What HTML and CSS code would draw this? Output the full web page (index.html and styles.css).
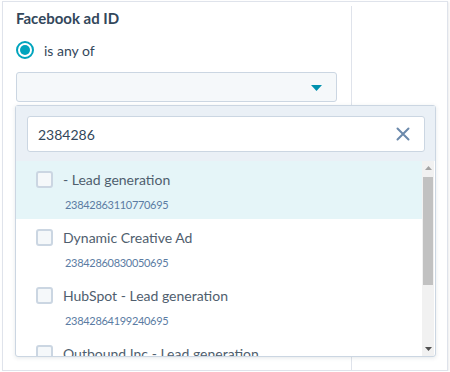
FILE: index.html
```html
<!DOCTYPE html>
<html lang="en">
<head>
    <meta charset="UTF-8">
    <meta name="viewport" content="width=device-width, initial-scale=1.0">
    <title>Facebook ad ID filter</title>
    <link rel="stylesheet" href="styles.css">
</head>
<body>
    <div class="frame">
        <div class="filter-col">
            <h3 class="filter-title">Facebook ad ID</h3>

            <label class="radio-row">
                <span class="radio"><span class="radio-dot"></span></span>
                is any of
            </label>

            <div class="select">
                <svg class="caret" width="11" height="6" viewBox="0 0 11 6">
                    <path d="M0 0h11L5.5 6z" fill="#0091ae"></path>
                </svg>
            </div>
        </div>
        <div class="side-col"></div>

        <!-- Dropdown panel -->
        <div class="dropdown">
            <div class="dropdown-header">
                <div class="search">
                    <span class="search-value">2384286</span>
                    <svg class="clear" width="14" height="14" viewBox="0 0 14 14">
                        <path d="M1.5 1.5l11 11M12.5 1.5l-11 11" stroke="#6b89ab" stroke-width="2" stroke-linecap="round"></path>
                    </svg>
                </div>
            </div>

            <div class="dropdown-list">
                <div class="options">
                    <div class="option active">
                        <span class="checkbox"></span>
                        <div class="option-text">
                            <div class="option-label">- Lead generation</div>
                            <div class="option-id">23842863110770695</div>
                        </div>
                    </div>
                    <div class="option">
                        <span class="checkbox"></span>
                        <div class="option-text">
                            <div class="option-label">Dynamic Creative Ad</div>
                            <div class="option-id">23842860830050695</div>
                        </div>
                    </div>
                    <div class="option">
                        <span class="checkbox"></span>
                        <div class="option-text">
                            <div class="option-label">HubSpot - Lead generation</div>
                            <div class="option-id">23842864199240695</div>
                        </div>
                    </div>
                    <div class="option">
                        <span class="checkbox"></span>
                        <div class="option-text">
                            <div class="option-label">Outbound Inc - Lead generation</div>
                        </div>
                    </div>
                </div>

                <div class="scrollbar">
                    <div class="scroll-btn">
                        <svg width="7" height="4" viewBox="0 0 7 4"><path d="M3.5 0L7 4H0z" fill="#a3a3a3"></path></svg>
                    </div>
                    <div class="scroll-track">
                        <div class="scroll-thumb"></div>
                    </div>
                    <div class="scroll-btn">
                        <svg width="7" height="4" viewBox="0 0 7 4"><path d="M0 0h7L3.5 4z" fill="#505050"></path></svg>
                    </div>
                </div>
            </div>
        </div>
    </div>
</body>
</html>
```

FILE: styles.css
```css
* {
    box-sizing: border-box;
    margin: 0;
    padding: 0;
}

body {
    background-color: #fff;
    font-family: Lato, "Open Sans", sans-serif;
    color: #33475b;
}

.frame {
    position: relative;
    display: flex;
    width: 446px;
    height: 370px;
    margin: 1px 0 0 2px;
    border: 1px solid #dfe3eb;
    box-shadow: 1px 1px 2px rgba(0, 0, 0, 0.08);
}

.filter-col {
    width: 349px;
    margin-top: 4px;
    padding: 2px 0 0 13px;
    border-right: 1px solid #dfe3eb;
}

.side-col {
    flex: 1;
}

.filter-title {
    font-size: 15px;
    line-height: 20px;
    font-weight: 700;
    color: #33475b;
}

.radio-row {
    display: flex;
    align-items: center;
    gap: 10px;
    margin-top: 12px;
    height: 20px;
    font-size: 14px;
    color: #33475b;
}

.radio {
    display: flex;
    align-items: center;
    justify-content: center;
    width: 18px;
    height: 18px;
    border: 2px solid #00a4bd;
    border-radius: 50%;
}

.radio-dot {
    width: 10px;
    height: 10px;
    border-radius: 50%;
    background-color: #00a4bd;
}

.select {
    display: flex;
    align-items: center;
    justify-content: flex-end;
    width: 321px;
    height: 30px;
    margin-top: 12px;
    padding-right: 14px;
    background-color: #f5f8fa;
    border: 1px solid #cbd6e2;
    border-radius: 3px;
}

.caret {
    margin-top: 1px;
}

/* Dropdown panel */
.dropdown {
    position: absolute;
    left: 12px;
    top: 103px;
    width: 421px;
    height: 252px;
    display: flex;
    flex-direction: column;
    background-color: #fff;
    border: 1px solid #cbd6e2;
    border-radius: 3px;
    box-shadow: 0 1px 4px rgba(45, 62, 80, 0.12);
}

.dropdown-header {
    padding: 10px 10px 9px 11px;
    background-color: #eaf0f6;
}

.search {
    display: flex;
    align-items: center;
    justify-content: space-between;
    height: 36px;
    padding: 0 14px 0 10px;
    background-color: #fff;
    border: 1px solid #cbd6e2;
    border-radius: 3px;
    font-size: 14px;
    color: #33475b;
}

.dropdown-list {
    flex: 1;
    display: flex;
    min-height: 0;
}

.options {
    flex: 1;
    overflow: hidden;
}

.option {
    display: flex;
    align-items: flex-start;
    gap: 10px;
    height: 58px;
    padding: 10px 0 0 20px;
}

.option.active {
    background-color: #e5f5f8;
}

.checkbox {
    width: 17px;
    height: 17px;
    flex-shrink: 0;
    background-color: #f5f8fa;
    border: 2px solid #cbd6e2;
    border-radius: 3px;
}

.option-label {
    font-size: 14px;
    line-height: 18px;
    color: #4f5e6e;
}

.option-id {
    margin-top: 8px;
    padding-left: 2px;
    font-size: 11px;
    line-height: 16px;
    letter-spacing: -0.3px;
    color: #5b7ca3;
}

/* Scrollbar */
.scrollbar {
    display: flex;
    flex-direction: column;
    width: 12px;
    margin-right: 1px;
    background-color: #f1f1f1;
}

.scroll-btn {
    display: flex;
    align-items: center;
    justify-content: center;
    height: 14px;
}

.scroll-track {
    flex: 1;
    padding: 2px 1px 0;
}

.scroll-thumb {
    height: 108px;
    background-color: #c1c1c1;
}
```
